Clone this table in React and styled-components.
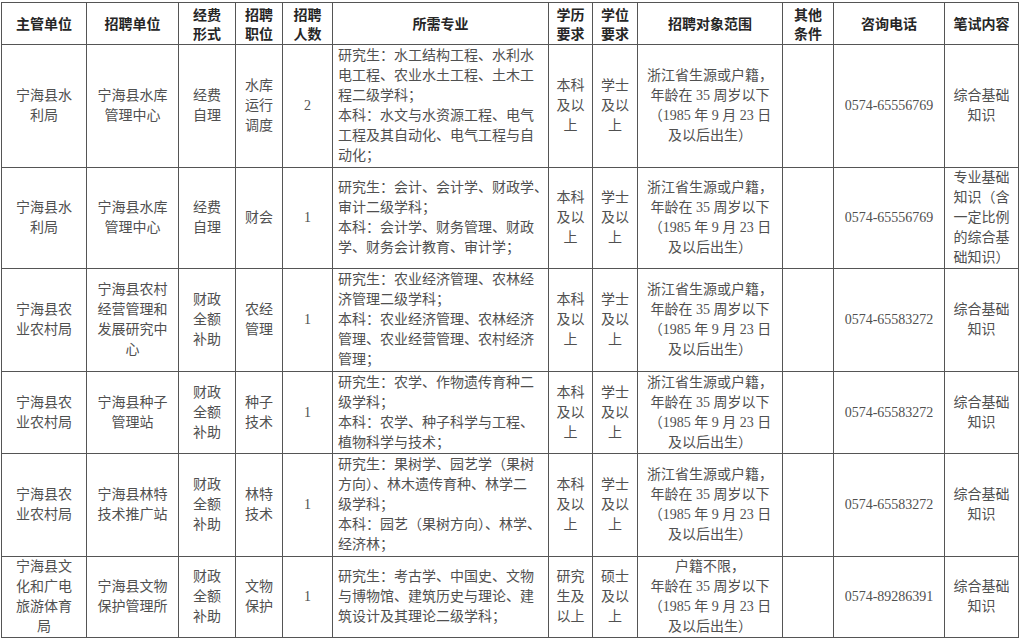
import React from "react";
import styled, { createGlobalStyle } from "styled-components";

const FONT = '"Liberation Serif", "Noto Sans CJK SC", serif';

const GlobalStyle = createGlobalStyle`
	html, body {
		margin: 0;
		padding: 0;
		background: #fff;
	}
	body {
		font-family: ${FONT};
	}
`;

const Sheet = styled.table`
	margin: 2px 0 0 1px;
	width: 1017px;
	table-layout: fixed;
	border-collapse: collapse;
	font-family: ${FONT};
	font-size: 14px;
	line-height: 20px;
	color: #505050;
`;

const HeadCell = styled.th`
	border: 1px solid #555;
	padding: 0;
	font-weight: 700;
	color: #262626;
	text-align: center;
	vertical-align: middle;
	line-height: 19px;
	padding-top: 2px;
`;

const Cell = styled.td`
	border: 1px solid #555;
	padding: 0 0 0 ${(p) => (p.$wide ? "5px" : "0")};
	text-align: ${(p) => (p.$wide ? "left" : "center")};
	vertical-align: middle;
	white-space: nowrap;
	overflow: hidden;
`;

const Row = styled.tr`
	height: ${(p) => p.$h}px;
`;

const Line = styled.span`
	display: block;
`;

const widths = [85, 92, 57, 47, 50, 216, 44, 45, 145, 51, 111, 74];

const headers = [
	["主管单位"],
	["招聘单位"],
	["经费", "形式"],
	["招聘", "职位"],
	["招聘", "人数"],
	["所需专业"],
	["学历", "要求"],
	["学位", "要求"],
	["招聘对象范围"],
	["其他", "条件"],
	["咨询电话"],
	["笔试内容"],
];

const scope = (first) => [
	first,
	"年龄在 35 周岁以下",
	"（1985 年 9 月 23 日",
	"及以后出生）",
];

const basic = ["综合基础", "知识"];
const bachelor = ["本科", "及以", "上"];
const degree = ["学士", "及以", "上"];
const funded = ["财政", "全额", "补助"];

const rows = [
	{
		h: 123,
		cells: [
			["宁海县水", "利局"],
			["宁海县水库", "管理中心"],
			["经费", "自理"],
			["水库", "运行", "调度"],
			["2"],
			[
				"研究生：水工结构工程、水利水",
				"电工程、农业水土工程、土木工",
				"程二级学科；",
				"本科：水文与水资源工程、电气",
				"工程及其自动化、电气工程与自",
				"动化；",
			],
			bachelor,
			degree,
			scope("浙江省生源或户籍，"),
			[],
			["0574-65556769"],
			basic,
		],
	},
	{
		h: 101,
		cells: [
			["宁海县水", "利局"],
			["宁海县水库", "管理中心"],
			["经费", "自理"],
			["财会"],
			["1"],
			[
				"研究生：会计、会计学、财政学、",
				"审计二级学科；",
				"本科：会计学、财务管理、财政",
				"学、财务会计教育、审计学；",
			],
			bachelor,
			degree,
			scope("浙江省生源或户籍，"),
			[],
			["0574-65556769"],
			["专业基础", "知识（含", "一定比例", "的综合基", "础知识）"],
		],
	},
	{
		h: 103,
		cells: [
			["宁海县农", "业农村局"],
			["宁海县农村", "经营管理和", "发展研究中", "心"],
			funded,
			["农经", "管理"],
			["1"],
			[
				"研究生：农业经济管理、农林经",
				"济管理二级学科；",
				"本科：农业经济管理、农林经济",
				"管理、农业经营管理、农村经济",
				"管理；",
			],
			bachelor,
			degree,
			scope("浙江省生源或户籍，"),
			[],
			["0574-65583272"],
			basic,
		],
	},
	{
		h: 82,
		cells: [
			["宁海县农", "业农村局"],
			["宁海县种子", "管理站"],
			funded,
			["种子", "技术"],
			["1"],
			[
				"研究生：农学、作物遗传育种二",
				"级学科；",
				"本科：农学、种子科学与工程、",
				"植物科学与技术；",
			],
			bachelor,
			degree,
			scope("浙江省生源或户籍，"),
			[],
			["0574-65583272"],
			basic,
		],
	},
	{
		h: 103,
		cells: [
			["宁海县农", "业农村局"],
			["宁海县林特", "技术推广站"],
			funded,
			["林特", "技术"],
			["1"],
			[
				"研究生：果树学、园艺学（果树",
				"方向）、林木遗传育种、林学二",
				"级学科；",
				"本科：园艺（果树方向）、林学、",
				"经济林；",
			],
			bachelor,
			degree,
			scope("浙江省生源或户籍，"),
			[],
			["0574-65583272"],
			basic,
		],
	},
	{
		h: 81,
		cells: [
			["宁海县文", "化和广电", "旅游体育", "局"],
			["宁海县文物", "保护管理所"],
			funded,
			["文物", "保护"],
			["1"],
			[
				"研究生：考古学、中国史、文物",
				"与博物馆、建筑历史与理论、建",
				"筑设计及其理论二级学科；",
			],
			["研究", "生及", "以上"],
			["硕士", "及以", "上"],
			scope("户籍不限，"),
			[],
			["0574-89286391"],
			basic,
		],
	},
];

const Lines = ({ items }) =>
	items.map((text, i) => <Line key={i}>{text}</Line>);

export default function App() {
	return (
		<>
			<GlobalStyle />
			<Sheet>
				<colgroup>
					{widths.map((w, i) => (
						<col key={i} style={{ width: w }} />
					))}
				</colgroup>
				<thead>
					<Row $h={42}>
						{headers.map((h, i) => (
							<HeadCell key={i}>
								<Lines items={h} />
							</HeadCell>
						))}
					</Row>
				</thead>
				<tbody>
					{rows.map((row, r) => (
						<Row key={r} $h={row.h}>
							{row.cells.map((c, i) => (
								<Cell key={i} $wide={i === 5}>
									<Lines items={c} />
								</Cell>
							))}
						</Row>
					))}
				</tbody>
			</Sheet>
		</>
	);
}
